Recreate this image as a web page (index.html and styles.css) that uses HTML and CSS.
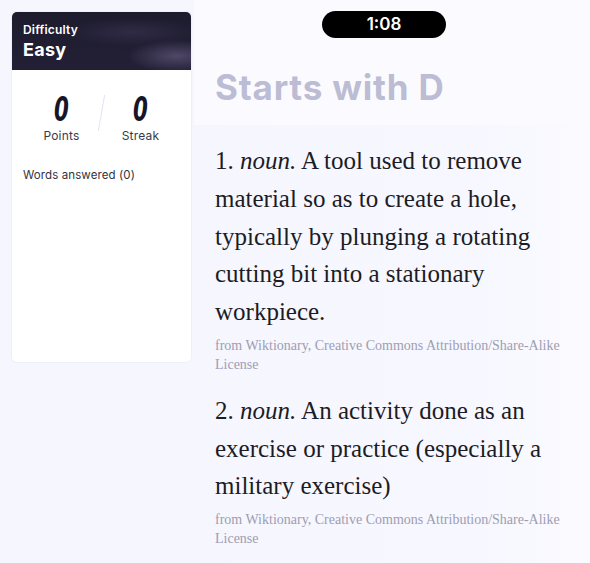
FILE: index.html
```html
<!DOCTYPE html>
<html>
<head>
<meta charset="utf-8">
<link rel="stylesheet" href="styles.css">
</head>
<body>
<div class="page">
  <aside class="side">
    <div class="card">
      <div class="card-head">
        <div class="label">Difficulty</div>
        <div class="level">Easy</div>
      </div>
      <div class="stats">
        <div class="stat">
          <div class="num">0</div>
          <div class="cap">Points</div>
        </div>
        <div class="divider"></div>
        <div class="stat">
          <div class="num">0</div>
          <div class="cap">Streak</div>
        </div>
      </div>
      <div class="answered">Words answered (0)</div>
    </div>
  </aside>
  <main class="main">
    <header class="top">
      <div class="timer">1:08</div>
      <h1 class="title">Starts with D</h1>
    </header>
    <section class="defs">
      <div class="def">
        <p class="text">1. <i>noun.</i> A tool used to remove material so as to create a hole, typically by plunging a rotating cutting bit into a stationary workpiece.</p>
        <p class="src">from Wiktionary, Creative Commons Attribution/Share-Alike License</p>
      </div>
      <div class="def">
        <p class="text">2. <i>noun.</i> An activity done as an exercise or practice (especially a military exercise)</p>
        <p class="src">from Wiktionary, Creative Commons Attribution/Share-Alike License</p>
      </div>
    </section>
  </main>
</div>
</body>
</html>
```
FILE: styles.css
```css
html, body {
  margin: 0;
  padding: 0;
  background: #f6f6fe;
}
.page {
  display: grid;
  grid-template-columns: 194px 1fr;
  width: 590px;
  height: 563px;
  overflow: hidden;
}
.side {
  background: #f6f6fe;
  padding: 12px 3px 0 12px;
}
.card {
  background: #ffffff;
  border-radius: 5px;
  height: 350px;
  box-shadow: 0 0 0 1px #efeffa;
  overflow: hidden;
  font-family: Inter, "Open Sans", sans-serif;
}
.card-head {
  height: 58px;
  box-sizing: border-box;
  padding: 11px 12px 0 11px;
  color: #fff;
  background:
    radial-gradient(1.2px 1.2px at 30px 6px, #ffffffcc 50%, transparent 51%),
    radial-gradient(1.2px 1.2px at 108px 14px, #ffffffaa 50%, transparent 51%),
    radial-gradient(1.2px 1.2px at 163px 13px, #ffffffbb 50%, transparent 51%),
    radial-gradient(1.2px 1.2px at 72px 52px, #ffffff99 50%, transparent 51%),
    radial-gradient(1.2px 1.2px at 112px 46px, #ffffff88 50%, transparent 51%),
    radial-gradient(1.2px 1.2px at 171px 43px, #ffffffaa 50%, transparent 51%),
    radial-gradient(1.2px 1.2px at 145px 30px, #ffffff77 50%, transparent 51%),
    radial-gradient(ellipse 50px 16px at 165px 44px, #4f4868 0%, transparent 100%),
    radial-gradient(ellipse 70px 14px at 120px 20px, #2f2b45 0%, transparent 100%),
    linear-gradient(180deg, #1d1b2d 0%, #232036 100%);
}
.label {
  font-size: 12px;
  font-weight: 600;
  line-height: 14px;
  letter-spacing: 0.2px;
}
.level {
  font-size: 18px;
  font-weight: 700;
  line-height: 22px;
  margin-top: 2px;
  letter-spacing: 0.3px;
}
.stats {
  display: flex;
  justify-content: center;
  align-items: flex-start;
  gap: 11px;
  padding-top: 22px;
  padding-right: 1px;
}
.stat {
  display: flex;
  flex-direction: column;
  align-items: center;
  width: 56px;
}
.num {
  font-family: "DejaVu Sans Condensed", "DejaVu Sans", sans-serif;
  font-style: italic;
  font-weight: 700;
  font-size: 33px;
  line-height: 36px;
  color: #16162a;
  transform: scaleX(0.72);
}
.cap {
  font-size: 12px;
  color: #3a3a4a;
  margin-top: 0;
  line-height: 16px;
  letter-spacing: 0.2px;
}
.divider {
  width: 1px;
  height: 36px;
  background: #e2e2f2;
  transform: skewX(-10deg);
  margin-top: 3px;
}
.answered {
  font-size: 11.5px;
  color: #333340;
  padding: 24px 0 0 11px;
  letter-spacing: 0.1px;
}
.main {
  display: flex;
  flex-direction: column;
  background: #fbfbff;
}
.top {
  height: 125px;
  box-sizing: border-box;
  padding: 11px 0 0 21px;
  background: #fbfbff;
}
.timer {
  width: 124px;
  height: 27px;
  margin-left: 107px;
  background: #000;
  border-radius: 14px;
  color: #fff;
  font-family: Inter, sans-serif;
  font-weight: 600;
  font-size: 17px;
  line-height: 27px;
  text-align: center;
}
.title {
  margin: 27px 0 0 0;
  font-family: Inter, sans-serif;
  font-weight: 700;
  font-size: 35px;
  line-height: 44px;
  color: #bcbcd4;
  letter-spacing: 0.8px;
}
.defs {
  flex: 1;
  padding: 17px 0 0 21px;
  background: linear-gradient(90deg, #f6f6fe 0%, #f7f7ff 70%, #fafaff 100%);
}
.def {
  margin-bottom: 18px;
}
.text {
  margin: 0 12px 0 0;
  font-family: "Liberation Serif", "Times New Roman", serif;
  font-size: 25px;
  line-height: 37.75px;
  color: #1c1c24;
}
.src {
  margin: 5px 12px 0 0;
  font-family: "Liberation Serif", "Times New Roman", serif;
  font-size: 14px;
  line-height: 19px;
  color: #9d9db3;
}
```
